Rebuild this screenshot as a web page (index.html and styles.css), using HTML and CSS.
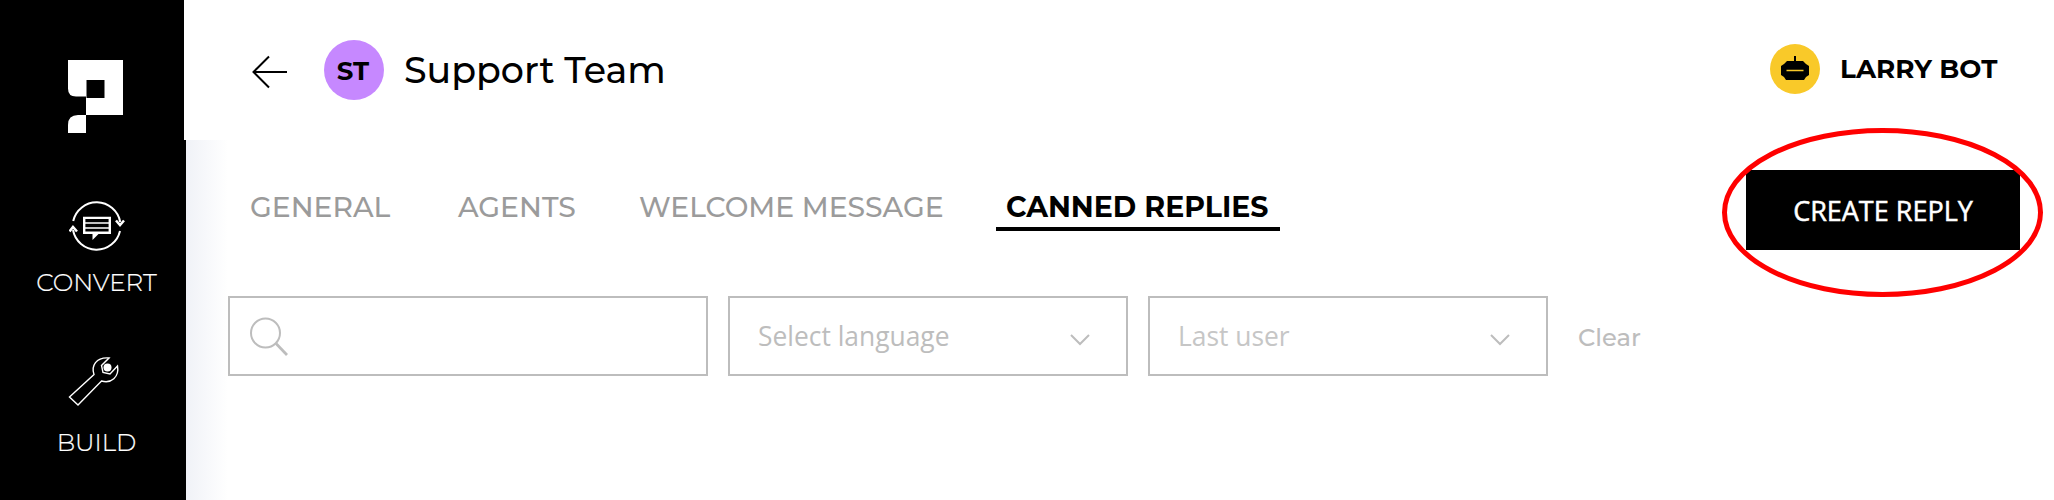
FILE: index.html
```html
<!DOCTYPE html>
<html lang="en">
<head>
<meta charset="utf-8">
<title>Support Team</title>
<link rel="stylesheet" href="styles.css">
</head>
<body>
<div class="app">
  <nav class="sidebar">
    <svg class="logo" width="55" height="73" viewBox="0 0 55 73"><path fill="#fff" fill-rule="evenodd" d="M0 0H55V55H18V36.500H8Q0 36.500 0 28.500ZM18.500 20V38H36.500V20ZM18 55V73H0V65Q0 55 10 55Z"/></svg>
    <a class="nav-item convert">
      <svg width="56" height="52" viewBox="0 0 56 52" fill="none" stroke="#fff" stroke-width="2"><path d="M4.200 21A24 24 0 0 1 51.200 22M51 31A24 24 0 0 1 4 30"/><path d="M47 20.500l4 4.500 4-4.500M.5 31.500l3.500-4.500 4 4.500" stroke-width="2.500"/><path d="M15.200 17.900H40.800V32.700H15.200Z" stroke-width="2.400"/><path d="M23.500 33h7l-7 7z" fill="#fff" stroke="none"/><path d="M16 23H40M16 28H40" stroke-width="1.600"/></svg>
      <span class="t">CONVERT</span>
    </a>
    <a class="nav-item build">
      <svg width="52" height="52" viewBox="0 0 52 52" fill="none" stroke="#fff" stroke-width="1.400"><path d="M26 18.500C23 10 28 1 41 2L33.500 9.500 35 16.500 42 18 49.500 10C51.500 21 43 28 33.500 25L10 49 1.500 41Z"/><circle cx="39.500" cy="11.500" r="4" fill="#fff" stroke="none"/></svg>
      <span class="t">BUILD</span>
    </a>
  </nav>
  <div class="page">
    <header class="header">
      <svg class="back" width="36" height="34" viewBox="0 0 36 34" fill="none" stroke="#000" stroke-width="2"><path d="M35 17H1.500M17 1.500L1.500 17 17 32.500"/></svg>
      <span class="avatar"><span class="t">ST</span></span>
      <h1 class="title"><span class="t">Support Team</span></h1>
      <svg class="bot" width="50" height="50" viewBox="0 0 50 50"><circle cx="25" cy="25" r="25" fill="#f9c929"/><path d="M24 12h2v5h7l3 3 3 2v9l-3 2-2 3H16l-2-3-3-2v-9l3-2 3-3h7z"/><path d="M16.500 26.500h17" stroke="#f9c929" stroke-width="1.500"/></svg>
      <span class="user"><span class="t">LARRY BOT</span></span>
    </header>
    <main class="content">
      <div class="toolbar">
        <div class="tabs">
          <a class="tab general"><span class="t">GENERAL</span></a>
          <a class="tab agents"><span class="t">AGENTS</span></a>
          <a class="tab welcome"><span class="t">WELCOME MESSAGE</span></a>
          <a class="tab active"><span class="t">CANNED REPLIES</span></a>
        </div>
        <button class="create"><span class="t">CREATE REPLY</span>
          <svg class="ring" width="321" height="169" viewBox="0 0 321 169"><ellipse cx="160.500" cy="84.500" rx="158" ry="82" fill="none" stroke="#f00" stroke-width="5"/></svg>
        </button>
      </div>
      <div class="filters">
        <div class="box search"><svg width="39" height="40" viewBox="0 0 39 40" fill="none" stroke="#bdbdbd" stroke-width="2"><circle cx="15.500" cy="16" r="14.500"/><path d="M26 26.500L37 38" stroke-width="2.700"/></svg></div>
        <div class="box select"><span class="t">Select language</span><svg width="20" height="12" viewBox="0 0 20 12" fill="none" stroke="#bdbdbd" stroke-width="2"><path d="M1 1l9 9 9-9"/></svg></div>
        <div class="box select last"><span class="t">Last user</span><svg width="20" height="12" viewBox="0 0 20 12" fill="none" stroke="#bdbdbd" stroke-width="2"><path d="M1 1l9 9 9-9"/></svg></div>
        <a class="clear"><span class="t">Clear</span></a>
      </div>
    </main>
  </div>
</div>
</body>
</html>
```
FILE: styles.css
```css
* { box-sizing: border-box; }
body { margin: 0; background: #fff; color: #000; font-family: Montserrat, Inter, sans-serif; }
.t { white-space: nowrap; }
.app { display: flex; height: 500px; overflow: hidden; background: #000; }
.sidebar { width: 184px; flex: none; display: flex; flex-direction: column; color: #fff; }
.logo { margin: 60px 0 0 68px; }
.nav-item { display: flex; flex-direction: column; align-items: center; width: 193px; font-weight: 300; font-size: 24.5px; line-height: 30px; -webkit-text-stroke: 0.2px #fff; }
.nav-item svg { flex: none; }
.convert { margin-top: 67px; }
.convert .t { margin-top: 15px; }
.build { margin-top: 59px; }
.build svg { margin-right: 6px; }
.build .t { margin-top: 19px; }
.page { flex: 1; display: flex; flex-direction: column; }
.header { height: 140px; background: #fff; display: flex; align-items: center; padding-left: 68px; }
.back { margin-top: 4px; }
.avatar { width: 60px; height: 60px; margin-left: 36px; padding: 1px 2px 0 0; border-radius: 50%; background: #c688ff; display: flex; align-items: center; justify-content: center; font-weight: 700; font-size: 26px; }
.title { margin: 0 0 0 20px; font-weight: 500; font-size: 36.4px; }
.bot { margin: 0 0 2px auto; }
.user { width: 214px; margin: 0 0 2px 20px; font-weight: 700; font-size: 26.2px; }
.content { flex: 1; margin-left: 2px; background: linear-gradient(90deg, #f0f2f7 0, #fff 42px); padding: 30px 34px 0 42px; }
.toolbar { display: flex; justify-content: space-between; height: 80px; }
.tabs { display: flex; align-items: flex-start; padding-top: 19px; font-size: 28.2px; font-weight: 500; line-height: 36px; color: #9b9b9b; }
.general { width: 230px; padding-left: 22px; }
.agents { width: 181px; }
.welcome { width: 357px; }
.active { width: 284px; height: 42px; padding-left: 10px; border-bottom: 4px solid #000; color: #000; font-size: 28.4px; font-weight: 700; }
.create { position: relative; width: 274px; height: 80px; padding: 0; border: 0; background: #000; color: #fff; font: 400 27px "Open Sans", sans-serif; -webkit-text-stroke: 0.5px #fff; }
.ring { position: absolute; left: -24px; top: -42px; }
.filters { display: flex; align-items: center; gap: 20px; margin-top: 46px; color: #bdbdbd; }
.box { height: 80px; border: 2px solid #bdbdbd; display: flex; align-items: center; justify-content: space-between; }
.search { width: 480px; padding: 2px 0 0 20px; }
.select { width: 400px; padding: 0 36px 0 28px; font: 400 26.4px "Open Sans", sans-serif; }
.select svg { margin-top: 7px; }
.last { color: #c6c6c6; }
.clear { margin: 2px 0 0 10px; font-size: 24.2px; font-weight: 500; }
```
